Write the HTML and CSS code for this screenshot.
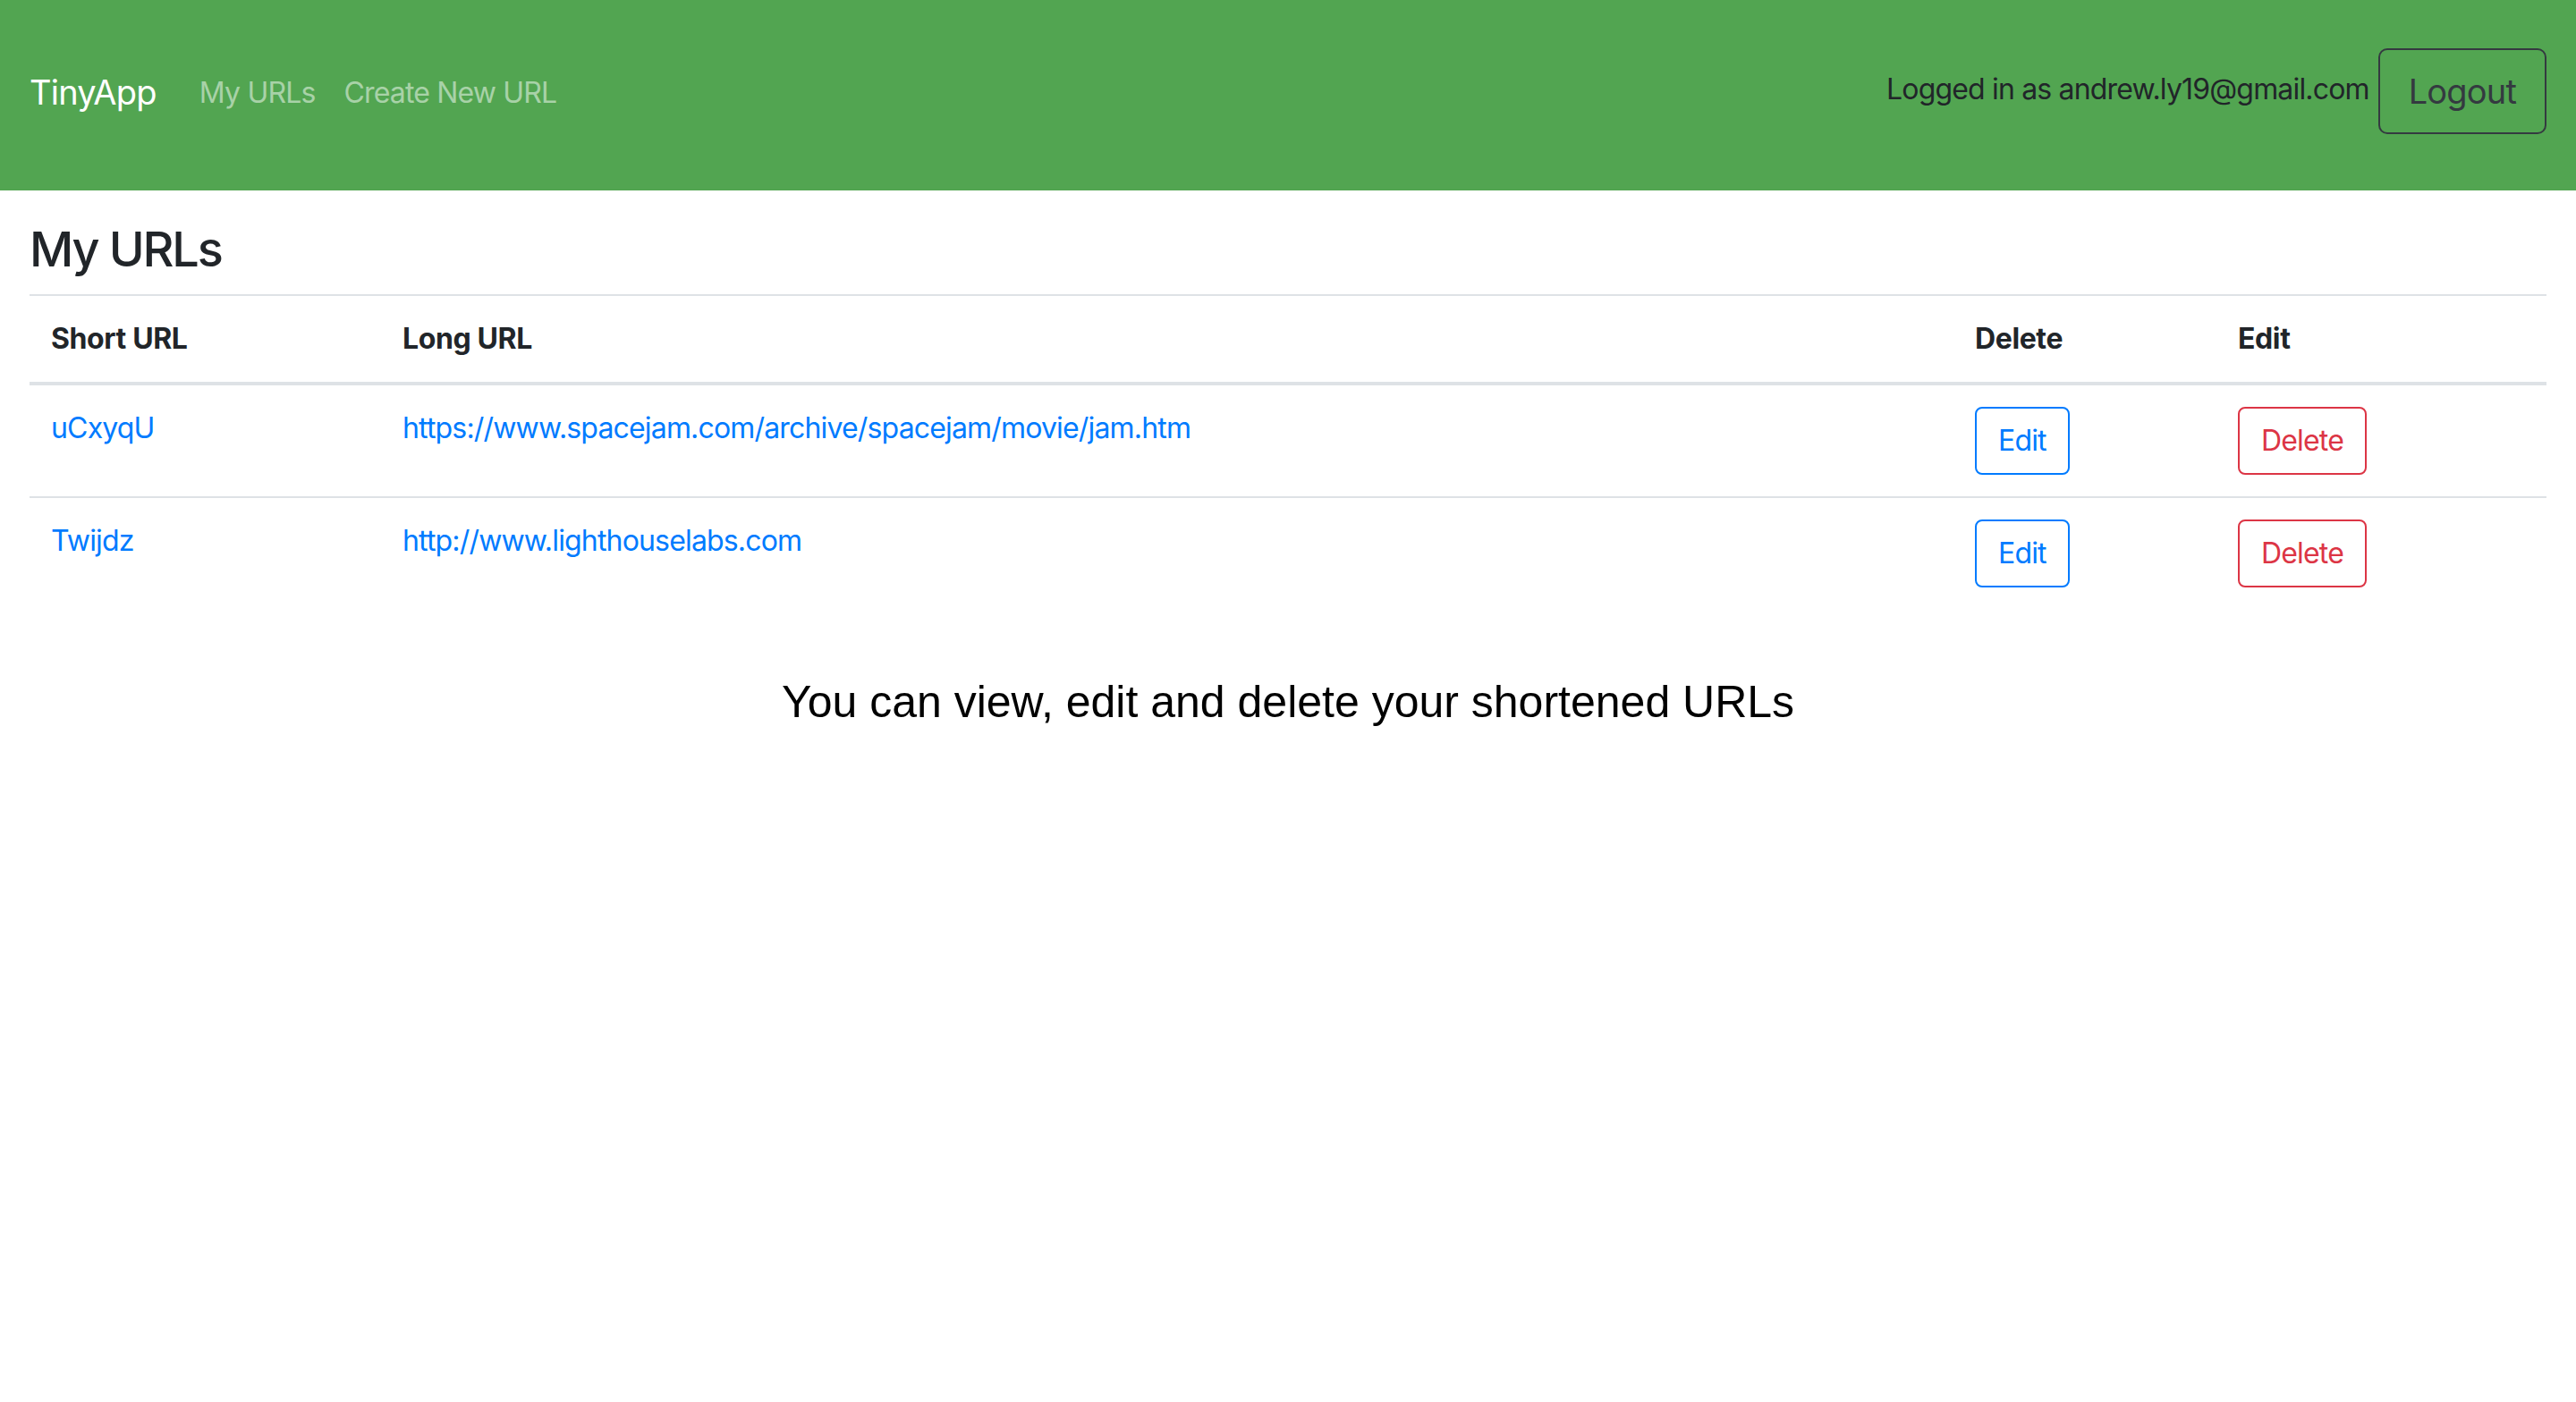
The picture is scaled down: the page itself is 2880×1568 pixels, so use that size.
FILE: index.html
```html
<!DOCTYPE html>
<html lang="en">
<head>
<meta charset="utf-8">
<title>TinyApp</title>
<link rel="stylesheet" href="styles.css">
</head>
<body>
<nav class="navbar">
  <a class="brand" href="#">TinyApp</a>
  <div class="nav-links">
    <a class="nav-link" href="#">My URLs</a>
    <a class="nav-link" href="#">Create New URL</a>
  </div>
  <div class="user">
    <span class="user-text">Logged in as andrew.ly19@gmail.com</span>
    <button class="btn btn-lg btn-outline-dark">Logout</button>
  </div>
</nav>
<main class="main">
  <h3 class="title">My URLs</h3>
  <table class="table">
    <thead>
      <tr>
        <th class="col-short">Short URL</th>
        <th class="col-long">Long URL</th>
        <th class="col-a">Delete</th>
        <th class="col-b">Edit</th>
      </tr>
    </thead>
    <tbody>
      <tr>
        <td><a href="#">uCxyqU</a></td>
        <td><a href="#">https://www.spacejam.com/archive/spacejam/movie/jam.htm</a></td>
        <td><button class="btn btn-outline-primary">Edit</button></td>
        <td><button class="btn btn-outline-danger">Delete</button></td>
      </tr>
      <tr>
        <td><a href="#">Twijdz</a></td>
        <td><a href="#">http://www.lighthouselabs.com</a></td>
        <td><button class="btn btn-outline-primary">Edit</button></td>
        <td><button class="btn btn-outline-danger">Delete</button></td>
      </tr>
    </tbody>
  </table>
  <p class="note">You can view, edit and delete your shortened URLs</p>
</main>
</body>
</html>
```
FILE: styles.css
```css
* { box-sizing: border-box; }
body {
  margin: 0;
  font-family: Inter, "Noto Sans", sans-serif;
  font-size: 32px;
  line-height: 1.5;
  letter-spacing: -0.026em;
  color: #212529;
  background: #fff;
}
a { color: #007bff; text-decoration: none; }

.navbar {
  display: flex;
  align-items: center;
  height: 213px;
  padding: 0 33px 10px;
  background: #52a551;
}
.brand {
  color: #fff;
  font-size: 38px;
  line-height: 1.5;
  letter-spacing: -0.02em;
  margin-right: 32px;
  padding-top: 4px;
}
.nav-links { display: flex; padding-top: 4px; }
.nav-link {
  color: rgba(255,255,255,0.5);
  padding: 0 16px;
}
.user {
  margin-left: auto;
  display: flex;
  align-items: center;
}
.user-text { margin-right: 10px; margin-top: -4px; }

.btn {
  font-family: inherit;
  letter-spacing: inherit;
  background: transparent;
  border: 2px solid;
  border-radius: 8px;
  font-size: 32px;
  line-height: 48px;
  padding: 12px 24px;
  cursor: pointer;
}
.btn-lg {
  font-size: 38px;
  line-height: 60px;
  padding: 16px 32px;
  border-radius: 10px;
}
.btn-outline-dark { color: #343a40; border-color: #343a40; }
.btn-outline-primary { color: #007bff; border-color: #007bff; }
.btn-outline-danger { color: #dc3545; border-color: #dc3545; }

.main { padding: 0 33px; }
.title {
  font-size: 54px;
  font-weight: 500;
  line-height: 1.24;
  letter-spacing: -0.04em;
  margin: 33px 0 16px;
}
.table {
  width: 100%;
  border-collapse: collapse;
}
.table th, .table td {
  padding: 24px;
  text-align: left;
  vertical-align: top;
  border-top: 2px solid #dee2e6;
}
.table th {
  font-weight: 700;
  letter-spacing: -0.012em;
  border-bottom: 4px solid #dee2e6;
}
.table tbody tr:first-child td { border-top: 0; }
.col-short { width: 393px; }
.col-long { width: 1758px; }
.col-a { width: 294px; }
.col-b { width: 369px; }

.note {
  text-align: center;
  font-family: "Liberation Sans", Arial, sans-serif;
  letter-spacing: normal;
  font-size: 50px;
  line-height: 1.2;
  margin: 74px 0 0;
  color: #000;
}
```
